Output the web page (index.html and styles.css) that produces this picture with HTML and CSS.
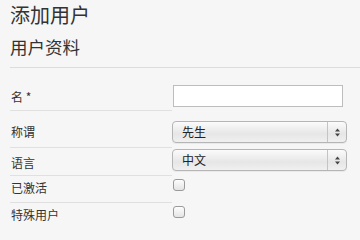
FILE: index.html
```html
<!DOCTYPE html>
<html lang="zh">
<head>
<meta charset="utf-8">
<link rel="stylesheet" href="styles.css">
</head>
<body>
<div class="page">
  <h1 class="title">添加用户</h1>
  <h2 class="subtitle">用户资料</h2>
  <div class="form">
    <div class="row r1">
      <div class="label">名 *</div>
      <div class="control"><input class="text" type="text"></div>
    </div>
    <div class="row r2">
      <div class="label">称谓</div>
      <div class="control">
        <div class="select"><span class="value">先生</span><span class="arrows"><svg width="7" height="9" viewBox="0 0 7 9"><path d="M3.5 0.5 L6 3.5 L1 3.5 Z M1 5.5 L6 5.5 L3.5 8.5 Z" fill="#444"/></svg></span></div>
      </div>
    </div>
    <div class="row r3">
      <div class="label">语言</div>
      <div class="control">
        <div class="select"><span class="value">中文</span><span class="arrows"><svg width="7" height="9" viewBox="0 0 7 9"><path d="M3.5 0.5 L6 3.5 L1 3.5 Z M1 5.5 L6 5.5 L3.5 8.5 Z" fill="#444"/></svg></span></div>
      </div>
    </div>
    <div class="row r4">
      <div class="label">已激活</div>
      <div class="control"><input class="check" type="checkbox"></div>
    </div>
    <div class="row r5">
      <div class="label">特殊用户</div>
      <div class="control"><input class="check" type="checkbox"></div>
    </div>
  </div>
</div>
</body>
</html>
```
FILE: styles.css
```css
html, body {
  margin: 0;
  padding: 0;
  background: #f6f6f6;
  font-family: "Noto Sans CJK SC", "Noto Sans", "Liberation Sans", sans-serif;
  color: #333;
  width: 360px;
  height: 225px;
  overflow: hidden;
}
.page {
  padding-left: 10px;
}
.title {
  margin: 0;
  padding-top: 0;
  font-size: 20px;
  line-height: 29px;
  font-weight: normal;
  color: #333;
}
.subtitle {
  margin: 0;
  padding-top: 7px;
  padding-bottom: 9px;
  font-size: 17.5px;
  line-height: 22px;
  font-weight: normal;
  color: #333;
  border-bottom: 1px solid #dcdcdc;
}
.row {
  display: grid;
  grid-template-columns: 162px 1fr;
  align-items: start;
}
.label {
  font-size: 12px;
  line-height: 14px;
  color: #333;
  padding-left: 1px;
  border-bottom: 1px solid #e0e0e0;
  box-sizing: border-box;
}
.r1 .label { height: 43px; padding-top: 22px; }
.r2 .label { height: 37px; padding-top: 14px; }
.r3 .label { height: 28px; padding-top: 8px; }
.r4 .label { height: 27px; padding-top: 5px; }
.r5 .label { height: 22px; padding-top: 5px; border-bottom: none; }
.r1 .control { padding-top: 17px; }
.r2 .control { padding-top: 10px; }
.r3 .control { padding-top: 1px; }
.r4 .control { padding-top: 3px; }
.r5 .control { padding-top: 3px; }
.text {
  display: block;
  margin: 0 0 0 1px;
  width: 170px;
  height: 22px;
  box-sizing: border-box;
  border: 1px solid #bdbdbd;
  background: #fff;
  padding: 0;
  outline: none;
}
.select {
  display: flex;
  width: 175px;
  height: 22px;
  box-sizing: border-box;
  border: 1px solid #b5b5b5;
  border-radius: 4px;
  background: linear-gradient(#fbfbfb, #e6e6e6 60%, #f0f0f0);
  box-shadow: 0 1px 0 rgba(0,0,0,0.05);
  font-size: 12px;
  line-height: 20px;
  color: #222;
}
.value {
  flex: 1;
  padding-left: 9px;
}
.arrows {
  width: 18px;
  border-left: 1px solid #c4c4c4;
  display: flex;
  align-items: center;
  justify-content: center;
}
.arrows svg { display: block; }
.check {
  -webkit-appearance: none;
  appearance: none;
  display: block;
  margin: 0 0 0 1px;
  width: 12px;
  height: 12px;
  box-sizing: border-box;
  border: 1px solid #9a9a9a;
  border-radius: 3px;
  background: linear-gradient(#fdfdfd, #e4e4e4);
}
```
